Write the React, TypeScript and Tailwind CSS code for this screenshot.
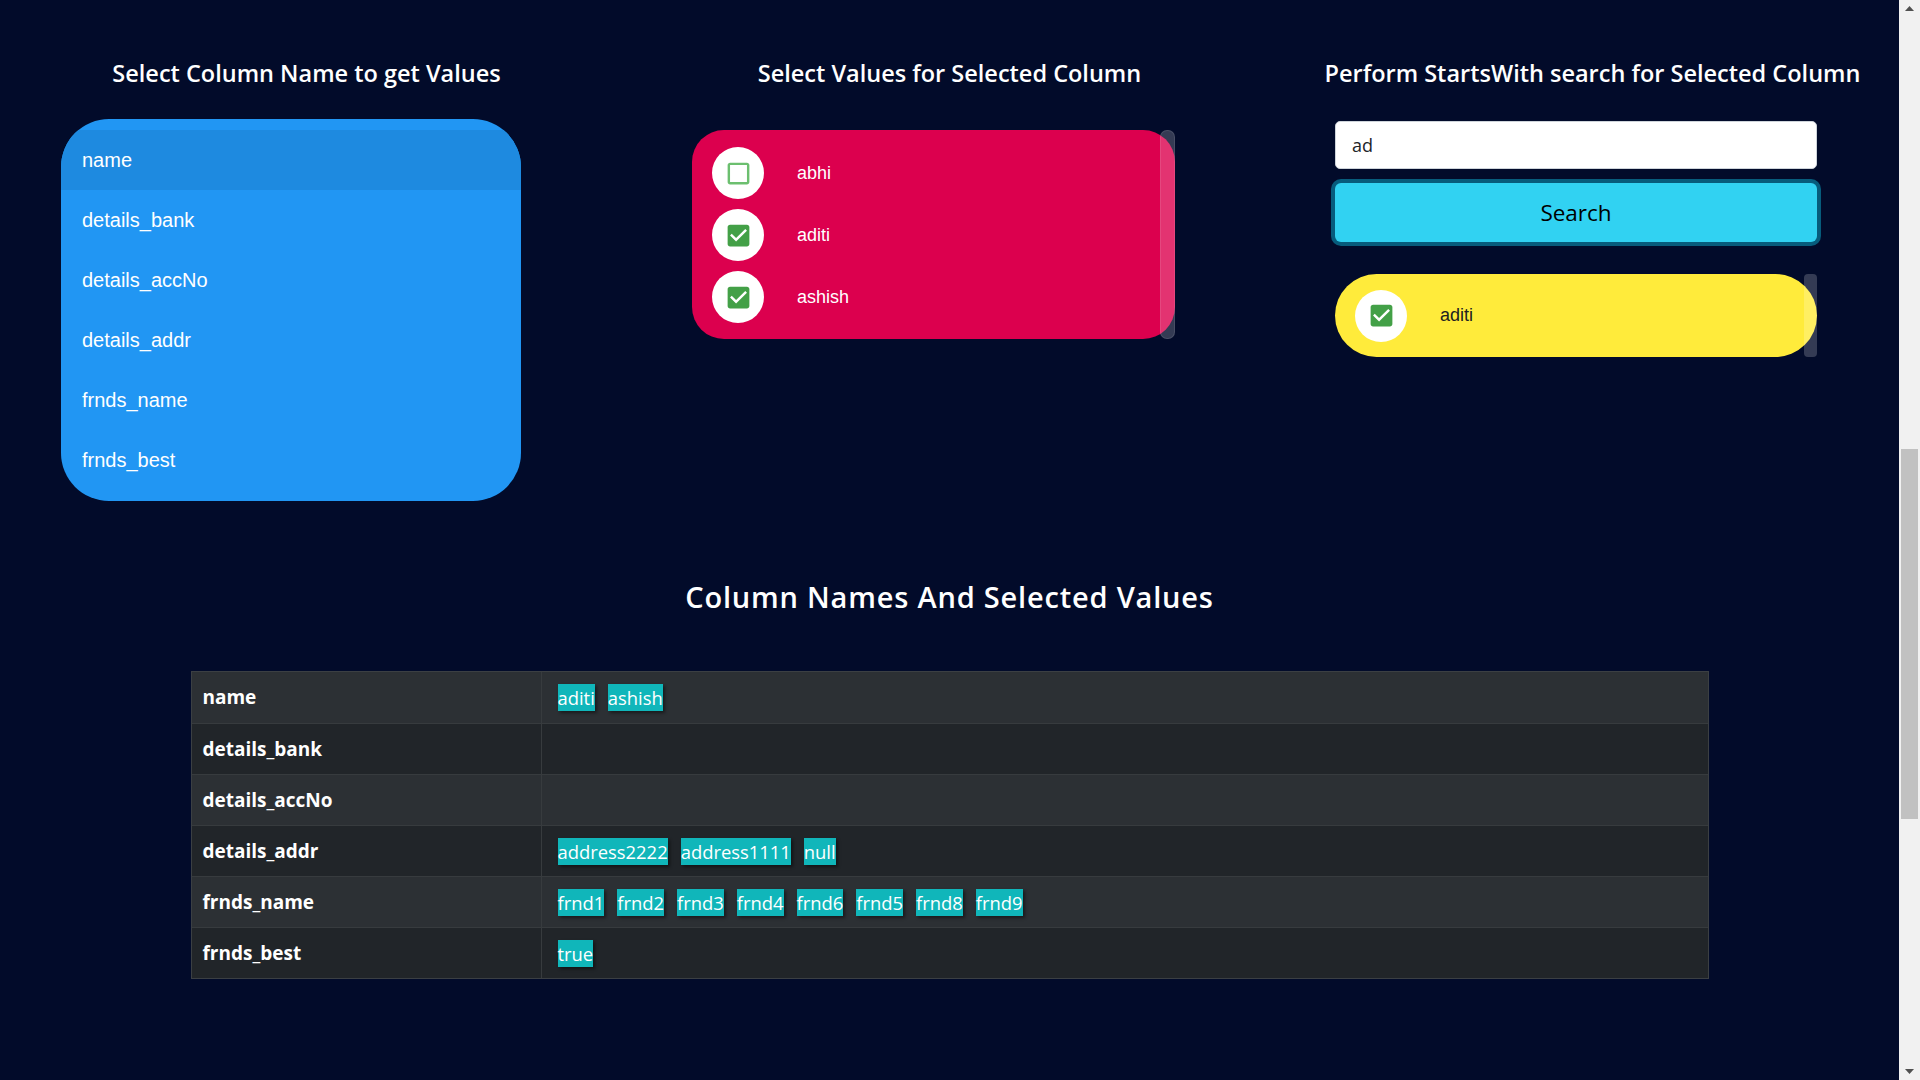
import React from "react"

const columnNames = ["name", "details_bank", "details_accNo", "details_addr", "frnds_name", "frnds_best"]

const columnValues = [
  { label: "abhi", checked: false },
  { label: "aditi", checked: true },
  { label: "ashish", checked: true },
]

const selected: [string, string[]][] = [
  ["name", ["aditi", "ashish"]],
  ["details_bank", []],
  ["details_accNo", []],
  ["details_addr", ["address2222", "address1111", "null"]],
  ["frnds_name", ["frnd1", "frnd2", "frnd3", "frnd4", "frnd6", "frnd5", "frnd8", "frnd9"]],
  ["frnds_best", ["true"]],
]

const heading = { fontFamily: '"Open Sans", "Noto Sans", sans-serif' }
const arial = { fontFamily: '"Liberation Sans", Arial, sans-serif' }

const CheckIcon = ({ checked }: { checked: boolean }) =>
  checked ? (
    <svg viewBox="0 0 24 24" className="w-[29px] h-[29px]">
      <path
        fill="#43a047"
        d="M19 3H5c-1.11 0-2 .9-2 2v14c0 1.1.89 2 2 2h14c1.11 0 2-.9 2-2V5c0-1.1-.89-2-2-2zm-9 14l-5-5 1.41-1.41L10 14.17l7.59-7.59L19 8l-9 9z"
      />
    </svg>
  ) : (
    <svg viewBox="0 0 24 24" className="w-[29px] h-[29px]">
      <path
        fill="#6cbf6f"
        d="M19 5v14H5V5h14m0-2H5c-1.1 0-2 .9-2 2v14c0 1.1.9 2 2 2h14c1.1 0 2-.9 2-2V5c0-1.1-.9-2-2-2z"
      />
    </svg>
  )

const CheckRow = ({ label, checked, dark }: { label: string; checked: boolean; dark?: boolean }) => (
  <div className="flex items-center h-[62px]">
    <div className="w-[52px] h-[52px] rounded-full bg-white flex items-center justify-center shrink-0">
      <CheckIcon checked={checked} />
    </div>
    <span
      className={"ml-[33px] text-[18px] " + (dark ? "text-[#212121]" : "text-white")}
      style={arial}
    >
      {label}
    </span>
  </div>
)

// browser scrollbar as it shows in the screenshot
const Scrollbar = () => (
  <div className="w-[21px] shrink-0 h-screen bg-[#f1f1f1] flex flex-col items-center">
    <div className="h-[17px] flex items-center justify-center">
      <svg width="9" height="5" viewBox="0 0 9 5">
        <polygon points="4.5,0 9,5 0,5" fill="#505050" />
      </svg>
    </div>
    <div className="h-[432px]" />
    <div className="h-[370px] w-[17px] bg-[#c1c1c1]" />
    <div className="flex-1" />
    <div className="h-[17px] flex items-center justify-center">
      <svg width="9" height="5" viewBox="0 0 9 5">
        <polygon points="0,0 9,0 4.5,5" fill="#505050" />
      </svg>
    </div>
  </div>
)

const App = () => {
  return (
    <div className="h-screen w-full flex overflow-hidden bg-[#020b2a]">
      <div className="w-[1899px] shrink-0 flex flex-col">
        <div className="grid grid-cols-3">
          {/* column names */}
          <div className="flex flex-col">
            <h4
              className="mt-[56px] pr-[20px] text-center text-white text-[23.5px] leading-[34px] font-semibold"
              style={heading}
            >
              Select Column Name to get Values
            </h4>
            <div className="mt-[29px] ml-[61px] w-[460px] rounded-[48px] bg-[#2196f3] py-[11px] overflow-hidden">
              {columnNames.map((c, i) => (
                <div
                  key={c}
                  className={"h-[60px] flex items-center pl-[21px] text-white text-[20px] " + (i === 0 ? "bg-[#1e8ae0]" : "")}
                  style={arial}
                >
                  {c}
                </div>
              ))}
            </div>
          </div>

          {/* values */}
          <div className="flex flex-col">
            <h4
              className="mt-[56px] text-center text-white text-[23.5px] leading-[34px] font-semibold"
              style={heading}
            >
              Select Values for Selected Column
            </h4>
            <div className="relative mt-[40px] ml-[59px] w-[483px] rounded-[32px] bg-[#dc004e] pt-[12px] pb-[11px] pl-[20px]">
              {columnValues.map((v) => (
                <CheckRow key={v.label} label={v.label} checked={v.checked} />
              ))}
              <div className="absolute right-0 top-0 bottom-0 w-[15px] rounded-[7px] bg-white/20 border border-white/10" />
            </div>
          </div>

          {/* starts with search */}
          <div className="flex flex-col">
            <h4
              className="mt-[56px] pl-[20px] text-center text-white text-[23.5px] leading-[34px] font-semibold"
              style={heading}
            >
              Perform StartsWith search for Selected Column
            </h4>
            <div className="mt-[31px] ml-[69px] w-[482px] flex flex-col">
              <input
                readOnly
                value="ad"
                className="h-[48px] w-full rounded-[5px] border border-[#ced4da] bg-white px-[16px] text-[18px] text-[#212529] outline-none"
                style={heading}
              />
              <button
                className="mt-[14px] h-[59px] w-full rounded-[6px] bg-[#31d2f2] text-black text-[22.5px] shadow-[0_0_0_4px_#075c7c]"
                style={heading}
              >
                Search
              </button>
              <div className="relative mt-[32px] h-[83px] rounded-full bg-[#ffeb3b] pl-[20px] flex items-center">
                <CheckRow label="aditi" checked dark />
                <div className="absolute right-0 top-0 bottom-0 w-[13px] rounded-[4px] bg-white/20" />
              </div>
            </div>
          </div>
        </div>

        {/* summary */}
        <h3
          className="mt-[76px] text-center text-white text-[29px] leading-[40px] font-semibold tracking-[0.8px]"
          style={heading}
        >
          Column Names And Selected Values
        </h3>

        <div className="mt-[54px] mx-auto w-[1518px] border border-[#3b3f43]">
          {selected.map(([name, vals], i) => (
            <div
              key={name}
              className={
                "flex h-[51px] border-[#373b3e] " +
                (i > 0 ? "border-t " : "") +
                (i % 2 === 0 ? "bg-[#2c3034]" : "bg-[#212529]")
              }
            >
              <div
                className="w-[350px] shrink-0 flex items-center pl-[11px] border-r border-[#373b3e] text-white font-bold text-[19px]"
                style={heading}
              >
                {name}
              </div>
              <div className="flex items-center gap-[13px] pl-[16px]">
                {vals.map((v) => (
                  <span
                    key={v}
                    className="bg-[#10b6ba] text-white text-[18.4px] leading-[27px] shadow-[2px_2px_3px_rgba(0,0,0,0.45)]"
                    style={heading}
                  >
                    {v}
                  </span>
                ))}
              </div>
            </div>
          ))}
        </div>
      </div>
      <Scrollbar />
    </div>
  )
}

export default App
